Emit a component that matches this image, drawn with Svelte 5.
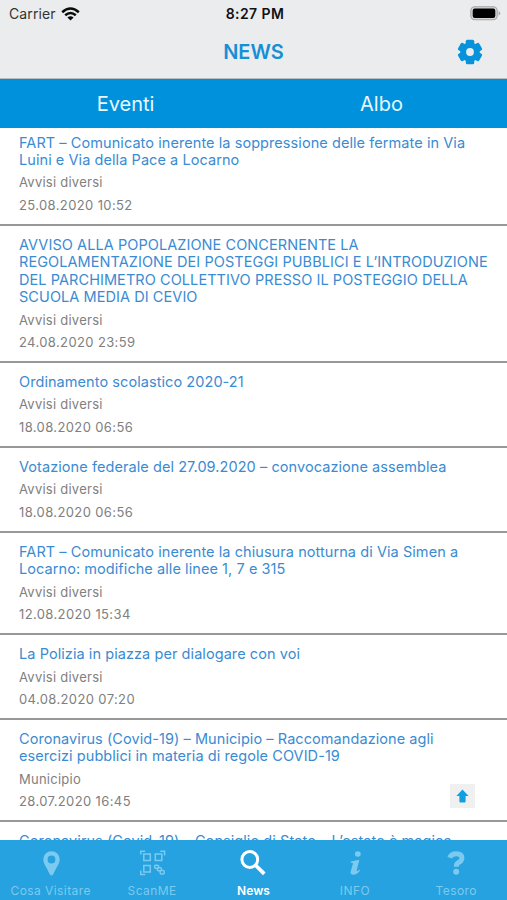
<script lang="ts">
	type NewsItem = { title: string; category?: string; date?: string };

	const news: NewsItem[] = [
		{
			title: 'FART – Comunicato inerente la soppressione delle fermate in Via Luini e Via della Pace a Locarno',
			category: 'Avvisi diversi',
			date: '25.08.2020 10:52'
		},
		{
			title: 'AVVISO ALLA POPOLAZIONE CONCERNENTE LA REGOLAMENTAZIONE DEI POSTEGGI PUBBLICI E L’INTRODUZIONE DEL PARCHIMETRO COLLETTIVO PRESSO IL POSTEGGIO DELLA SCUOLA MEDIA DI CEVIO',
			category: 'Avvisi diversi',
			date: '24.08.2020 23:59'
		},
		{ title: 'Ordinamento scolastico 2020-21', category: 'Avvisi diversi', date: '18.08.2020 06:56' },
		{
			title: 'Votazione federale del 27.09.2020 – convocazione assemblea',
			category: 'Avvisi diversi',
			date: '18.08.2020 06:56'
		},
		{
			title: 'FART – Comunicato inerente la chiusura notturna di Via Simen a Locarno: modifiche alle linee 1, 7 e 315',
			category: 'Avvisi diversi',
			date: '12.08.2020 15:34'
		},
		{
			title: 'La Polizia in piazza per dialogare con voi',
			category: 'Avvisi diversi',
			date: '04.08.2020 07:20'
		},
		{
			title: 'Coronavirus (Covid-19) – Municipio – Raccomandazione agli esercizi pubblici in materia di regole COVID-19',
			category: 'Municipio',
			date: '28.07.2020 16:45'
		},
		{ title: 'Coronavirus (Covid-19) – Consiglio di Stato – L’estate è magica' }
	];

	const tabs = [
		{ id: 'visit', label: 'Cosa Visitare' },
		{ id: 'scan', label: 'ScanME' },
		{ id: 'news', label: 'News' },
		{ id: 'info', label: 'INFO' },
		{ id: 'tesoro', label: 'Tesoro' }
	];

	let activeTab = $state('news');
	let list: HTMLElement;

	function scrollToTop() {
		list.scrollTo({ top: 0, behavior: 'smooth' });
	}
</script>

<div class="phone">
	<div class="status">
		<div class="carrier">
			<span>Carrier</span>
			<svg width="19" height="14" viewBox="0 0 19 14">
				<g fill="none" stroke="#0b0b0b" stroke-width="2.5">
					<path d="M1.2 5.2Q9.5 -2.2 17.8 5.2" />
					<path d="M4.2 8.3Q9.5 3.6 14.8 8.3" />
				</g>
				<path d="M6.4 10.5Q9.5 8 12.6 10.5L9.5 13.6Z" fill="#0b0b0b" />
			</svg>
		</div>
		<span class="time">8:27 PM</span>
		<svg class="battery" width="31" height="15" viewBox="0 0 31 15">
			<rect x="0.8" y="0.8" width="26.4" height="13" rx="4" fill="#d5d5d5" stroke="#a4a5a5" stroke-width="1.1" />
			<rect x="2.7" y="2.6" width="22.6" height="9.4" rx="2.2" fill="#000" />
			<path d="M28.6 5v4.6q1.6-.7 1.6-2.3T28.6 5Z" fill="#a4a5a5" />
		</svg>
	</div>

	<header>
		<h1>NEWS</h1>
		<button type="button" class="settings" aria-label="Impostazioni">
			<svg width="26" height="26" viewBox="0 0 26 26">
				<g fill="#0992dc">
					<circle cx="13" cy="13" r="9.8" />
					{#each [0, 60, 120] as angle}
						<rect x="8.8" y="0.8" width="8.4" height="24.4" rx="1.5" transform="rotate({angle} 13 13)" />
					{/each}
				</g>
				<circle cx="13" cy="13" r="3.9" fill="#ebeced" />
			</svg>
		</button>
	</header>

	<nav class="sections">
		<button type="button">Eventi</button>
		<button type="button">Albo</button>
	</nav>

	<main bind:this={list}>
		{#each news as item}
			<article>
				<h2>{item.title}</h2>
				{#if item.category}
					<p>{item.category}</p>
				{/if}
				{#if item.date}
					<p class="date">{item.date}</p>
				{/if}
			</article>
		{/each}
	</main>

	<button type="button" class="to-top" aria-label="Torna su" onclick={scrollToTop}>
		<svg width="13" height="14" viewBox="0 0 13 14">
			<path d="M6.5 0.4L12.6 6.9H9.6V12.6Q9.6 13.4 8.8 13.4H4.2Q3.4 13.4 3.4 12.6V6.9H0.4Z" fill="#109fe0" />
		</svg>
	</button>

	<nav class="tabbar">
		{#each tabs as tab}
			<button type="button" class:active={activeTab === tab.id} onclick={() => (activeTab = tab.id)}>
				<svg width="28" height="28" viewBox="0 0 28 28" fill="currentColor">
					{#if tab.id === 'visit'}
						<path
							fill-rule="evenodd"
							d="M14.5 2.2a8.2 8.2 0 0 0-8.2 8.2c0 4 3 7.2 6.5 14.8q1.7 2.4 3.4 0c3.5-7.6 6.5-10.8 6.5-14.8a8.2 8.2 0 0 0-8.2-8.2Zm0 4.4a3.9 3.9 0 1 1 0 7.8a3.9 3.9 0 0 1 0-7.8Z"
						/>
					{:else if tab.id === 'scan'}
						<g fill="none" stroke="currentColor" stroke-width="1.5" transform="translate(.8 0)">
							<rect x="5" y="5" width="6.5" height="6.5" />
							<rect x="16.5" y="5" width="6.5" height="6.5" />
							<rect x="5" y="16.5" width="6.5" height="6.5" />
							<path d="M2 5.5V2.3H6.5M21.5 2.3H25.8V6.5M2 21.5V25.6H6.5" />
							<rect x="15.8" y="16.3" width="4" height="3" rx="1" />
							<rect x="18.6" y="18.8" width="4" height="3" rx="1" />
							<rect x="21.4" y="21.5" width="4" height="3.5" rx="1" />
						</g>
					{:else if tab.id === 'news'}
						<g fill="none" stroke="currentColor" stroke-width="3">
							<circle cx="10.8" cy="10.5" r="7.9" />
							<path d="M16.6 16.2L25.3 24.9" stroke-width="3.7" />
						</g>
					{:else if tab.id === 'info'}
						<ellipse cx="16.8" cy="5" rx="2.9" ry="2.7" />
						<path d="M9.8 12.4L18.4 10.7L15.7 21.2Q15.4 22.7 16.7 22L18.2 20.7L19.1 21.5Q16.1 25.7 12.2 25.7Q8.8 25.7 9.7 22.3L12 14.6Q12.2 13.5 9.6 13.7Z" />
					{:else}
						<path d="M7.8 8.8Q9.2 4.7 14.3 4.7Q19.9 4.7 19.9 9Q19.9 11.8 16.6 13.4Q14.3 14.6 14.3 17.8" fill="none" stroke="currentColor" stroke-width="5" />
						<circle cx="14.2" cy="22.8" r="3" />
					{/if}
				</svg>
				<span>{tab.label}</span>
			</button>
		{/each}
	</nav>
</div>

<style>
	:global(body) {
		margin: 0;
		font-family: Inter, 'Liberation Sans', sans-serif;
		background: #fff;
	}

	.phone {
		position: relative;
		display: flex;
		flex-direction: column;
		height: 100vh;
		overflow: hidden;
	}

	button {
		border: 0;
		padding: 0;
		background: none;
		font: inherit;
		letter-spacing: inherit;
		color: inherit;
	}

	svg {
		display: block;
		flex: none;
	}

	.status {
		display: grid;
		grid-template-columns: 1fr auto 1fr;
		align-items: center;
		height: 27px;
		padding: 0 6px 0 9px;
		background: #ebeced;
		color: #111;
		font-size: 14px;
	}

	.carrier {
		display: flex;
		align-items: center;
		gap: 5px;
		color: #333;
		letter-spacing: 0.1px;
	}

	.time {
		font-weight: 600;
		letter-spacing: 0.4px;
	}

	.battery {
		justify-self: end;
	}

	header {
		display: grid;
		grid-template-columns: 1fr auto 1fr;
		align-items: center;
		height: 49px;
		padding: 0 24px 2px;
		background: #ebeced;
		border-bottom: 1px solid #b9bec2;
	}

	h1 {
		grid-column: 2;
		margin: 0;
		font-size: 20px;
		font-weight: 600;
		color: #168fd6;
	}

	.settings {
		justify-self: end;
	}

	.sections {
		display: grid;
		grid-template-columns: 1fr 1fr;
		gap: 5px;
		flex: none;
		height: 49px;
		background: #0091dc;
		color: #eaf8ff;
		font-size: 20px;
		z-index: 1;
	}

	/* the first row sits slightly under the section bar */
	main {
		flex: 1;
		min-height: 0;
		overflow: hidden;
		margin-top: -4.4px;
	}

	article {
		padding: 10px 17px 7.7px 19px;
		border-bottom: 2px solid #989898;
	}

	h2 {
		margin: 0 0 3px;
		font-size: 14.5px;
		font-weight: 400;
		line-height: 17.4px;
		letter-spacing: 0.07px;
		color: #3a8bd2;
	}

	p {
		margin: 0;
		font-size: 13px;
		line-height: 22.4px;
		letter-spacing: 0.25px;
		color: #808080;
	}

	.date {
		letter-spacing: 0.38px;
	}

	.to-top {
		position: absolute;
		right: 32px;
		bottom: 92px;
		display: grid;
		place-items: center;
		width: 25px;
		height: 24px;
		background: #f0f0f0;
	}

	.tabbar {
		display: grid;
		grid-template-columns: repeat(5, 1fr);
		flex: none;
		height: 60px;
		background: #25a2df;
		color: #7dcaf0;
		font-size: 12px;
		letter-spacing: 0.42px;
	}

	.tabbar button {
		display: flex;
		flex-direction: column;
		align-items: center;
		padding-top: 9px;
		gap: 6px;
		white-space: nowrap;
	}

	.tabbar .active {
		color: #fff;
		font-weight: 600;
		letter-spacing: 0.1px;
	}
</style>
